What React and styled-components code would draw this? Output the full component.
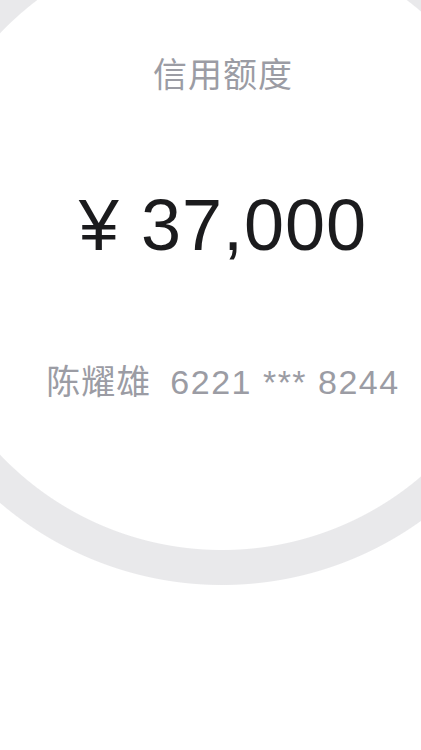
import React from 'react'
import styled, { createGlobalStyle } from 'styled-components'

const GlobalStyle = createGlobalStyle`
  html, body {
    margin: 0;
    padding: 0;
    background: #ffffff;
  }
  * { box-sizing: border-box; }
`

// 바탕의 큰 원형 링은 배경 그라디언트로
const StPage = styled.div`
  width: 421px;
  height: 750px;
  overflow: hidden;
  display: flex;
  flex-direction: column;
  align-items: center;
  padding: 56px 0 0 25px;
  background-color: #ffffff;
  background-image: radial-gradient(
    circle at 222px 244px,
    transparent 305.5px,
    #e9e9eb 306.5px,
    #e9e9eb 340.5px,
    transparent 341.5px
  );
`

const StTitle = styled.div`
  font-family: "Noto Sans CJK SC", sans-serif;
  font-size: 34px;
  line-height: 34px;
  color: #9b9ca4;
  letter-spacing: 1px;
`

const StAmount = styled.div`
  margin-top: 99px;
  font-family: "Liberation Sans", Arial, sans-serif;
  font-size: 72px;
  line-height: 72px;
  color: #1b1b1d;
  letter-spacing: 1px;
  white-space: pre;
`

const StHolder = styled.div`
  margin-top: 102px;
  display: flex;
  align-items: baseline;
  gap: ${(props) => props.gap}px;
  color: #9b9ca4;
  font-size: 34px;
  line-height: 34px;
`

const StName = styled.span`
  font-family: "Noto Sans CJK SC", sans-serif;
  letter-spacing: 1px;
`

const StCard = styled.span`
  font-family: "Liberation Sans", Arial, sans-serif;
  letter-spacing: 1.5px;
  white-space: pre;
`

const card = {
  title: '信用额度',
  amount: '¥ 37,000',
  name: '陈耀雄',
  number: '6221 *** 8244',
}

function App() {
  return (
    <>
      <GlobalStyle />
      <StPage>
        <StTitle>{card.title}</StTitle>
        <StAmount>{card.amount}</StAmount>
        <StHolder gap={19}>
          <StName>{card.name}</StName>
          <StCard>{card.number}</StCard>
        </StHolder>
      </StPage>
    </>
  )
}

export default App
